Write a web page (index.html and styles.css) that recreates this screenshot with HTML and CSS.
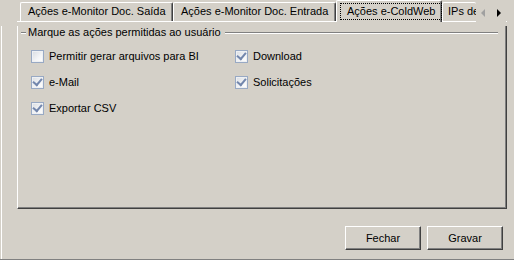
FILE: index.html
```html
<!DOCTYPE html>
<html lang="pt-BR">
<head>
<meta charset="utf-8">
<title>Ações e-ColdWeb</title>
<link rel="stylesheet" href="styles.css">
</head>
<body>
<div class="window">
  <div class="tabs">
    <div class="tab tab-saida">Ações e-Monitor Doc. Saída</div>
    <div class="tab tab-entrada">Ações e-Monitor Doc. Entrada</div>
    <div class="tab tab-sel"><span class="focus">Ações e-ColdWeb</span></div>
    <div class="tab tab-ips">IPs de</div>
    <div class="scroller">
      <svg width="30" height="22" viewBox="0 0 30 22">
        <polygon points="9,9 5,13 9,17" fill="#a0a0a0"/>
        <polygon points="21,9 25,13 21,17" fill="#000"/>
      </svg>
    </div>
  </div>
  <div class="content">
    <div class="panel">
      <div class="group-title">
        <span class="line short"></span>
        <span class="legend">Marque as ações permitidas ao usuário</span>
        <span class="line long"></span>
      </div>
      <div class="checks">
        <label class="check"><span class="box"></span><span>Permitir gerar arquivos para BI</span></label>
        <label class="check"><span class="box on"></span><span>Download</span></label>
        <label class="check"><span class="box on"></span><span>e-Mail</span></label>
        <label class="check"><span class="box on"></span><span>Solicitações</span></label>
        <label class="check"><span class="box on"></span><span>Exportar CSV</span></label>
      </div>
    </div>
    <div class="actions">
      <button class="btn">Fechar</button>
      <button class="btn">Gravar</button>
    </div>
  </div>
</div>
</body>
</html>
```

FILE: styles.css
```css
* { box-sizing: border-box; }
html, body {
  margin: 0;
  padding: 0;
  background: #d4d0c8;
}
body {
  font-family: "Liberation Sans", Arial, sans-serif;
  font-size: 11px;
  color: #000;
}
.window {
  width: 514px;
  height: 260px;
  border-bottom: 1px solid #808080;
  overflow: hidden;
}
.tabs {
  display: flex;
  align-items: flex-end;
  height: 22px;
  margin-left: 17px;
  width: 490px;
  padding-left: 3px;
  border-bottom: 1px solid #fff;
}
.tab {
  flex: none;
  height: 19px;
  line-height: 17px;
  padding-left: 7px;
  white-space: nowrap;
  border-top: 1px solid #fff;
  border-left: 1px solid #fff;
  border-right: 1px solid #404040;
  box-shadow: inset -1px 0 #808080;
  border-radius: 2px 2px 0 0;
}
.tab-saida { width: 153px; }
.tab-entrada { width: 163px; }
.tab-sel {
  width: 106px;
  height: 22px;
  margin-bottom: -1px;
  padding: 2px 0 0 3px;
  line-height: 14px;
  background: #d4d0c8;
}
.focus {
  display: inline-block;
  padding: 0 6px;
  height: 17px;
  line-height: 15px;
  border: 1px dotted #000;
}
.tab-ips {
  width: 34px;
  padding-left: 5px;
  overflow: hidden;
  border-right: none;
  box-shadow: none;
}
.scroller {
  flex: none;
  width: 30px;
  height: 22px;
  margin-bottom: -1px;
  background: #d4d0c8;
  display: flex;
}
.content {
  margin-left: 1px;
  height: 237px;
  border-left: 1px solid #fff;
}
.panel {
  margin-left: 15px;
  width: 490px;
  height: 183px;
  border-left: 1px solid #fff;
  border-right: 1px solid #404040;
  border-bottom: 1px solid #404040;
  box-shadow: inset -1px -1px #808080;
  padding-left: 3px;
}
.group-title {
  display: flex;
  align-items: center;
  height: 13px;
  margin-top: 4px;
  width: 477px;
}
.line {
  height: 2px;
  border-top: 1px solid #808080;
  border-bottom: 1px solid #fff;
}
.line.short { width: 5px; flex: none; }
.line.long { flex: 1; }
.legend {
  padding: 0 4px 0 2px;
  line-height: 13px;
  white-space: nowrap;
}
.checks {
  display: grid;
  grid-template-columns: 204px 1fr;
  grid-auto-rows: 26px;
  margin-top: 4px;
  padding-left: 10px;
}
.check {
  display: flex;
  align-items: center;
  gap: 5px;
  white-space: nowrap;
}
.box {
  flex: none;
  width: 13px;
  height: 13px;
  border: 1px solid #98a9c4;
  background: linear-gradient(135deg, #d8dce2 0%, #f4f5f7 60%, #ffffff 100%);
  box-shadow: inset 0 0 0 1px #eef0f3;
  display: flex;
  align-items: center;
  justify-content: center;
}
.box.on::after {
  content: "";
  width: 7px;
  height: 4px;
  margin-top: -2px;
  border-left: 2px solid #7387ad;
  border-bottom: 2px solid #7387ad;
  transform: rotate(-50deg);
}
.actions {
  display: flex;
  justify-content: flex-end;
  gap: 6px;
  margin-top: 17px;
  padding-right: 11px;
}
.btn {
  width: 76px;
  height: 24px;
  padding: 0;
  font: inherit;
  color: #000;
  background: #d4d0c8;
  border: none;
  border-top: 1px solid #fff;
  border-left: 1px solid #fff;
  border-right: 1px solid #404040;
  border-bottom: 1px solid #404040;
  box-shadow: inset -1px -1px #808080;
  border-radius: 0;
}
```
